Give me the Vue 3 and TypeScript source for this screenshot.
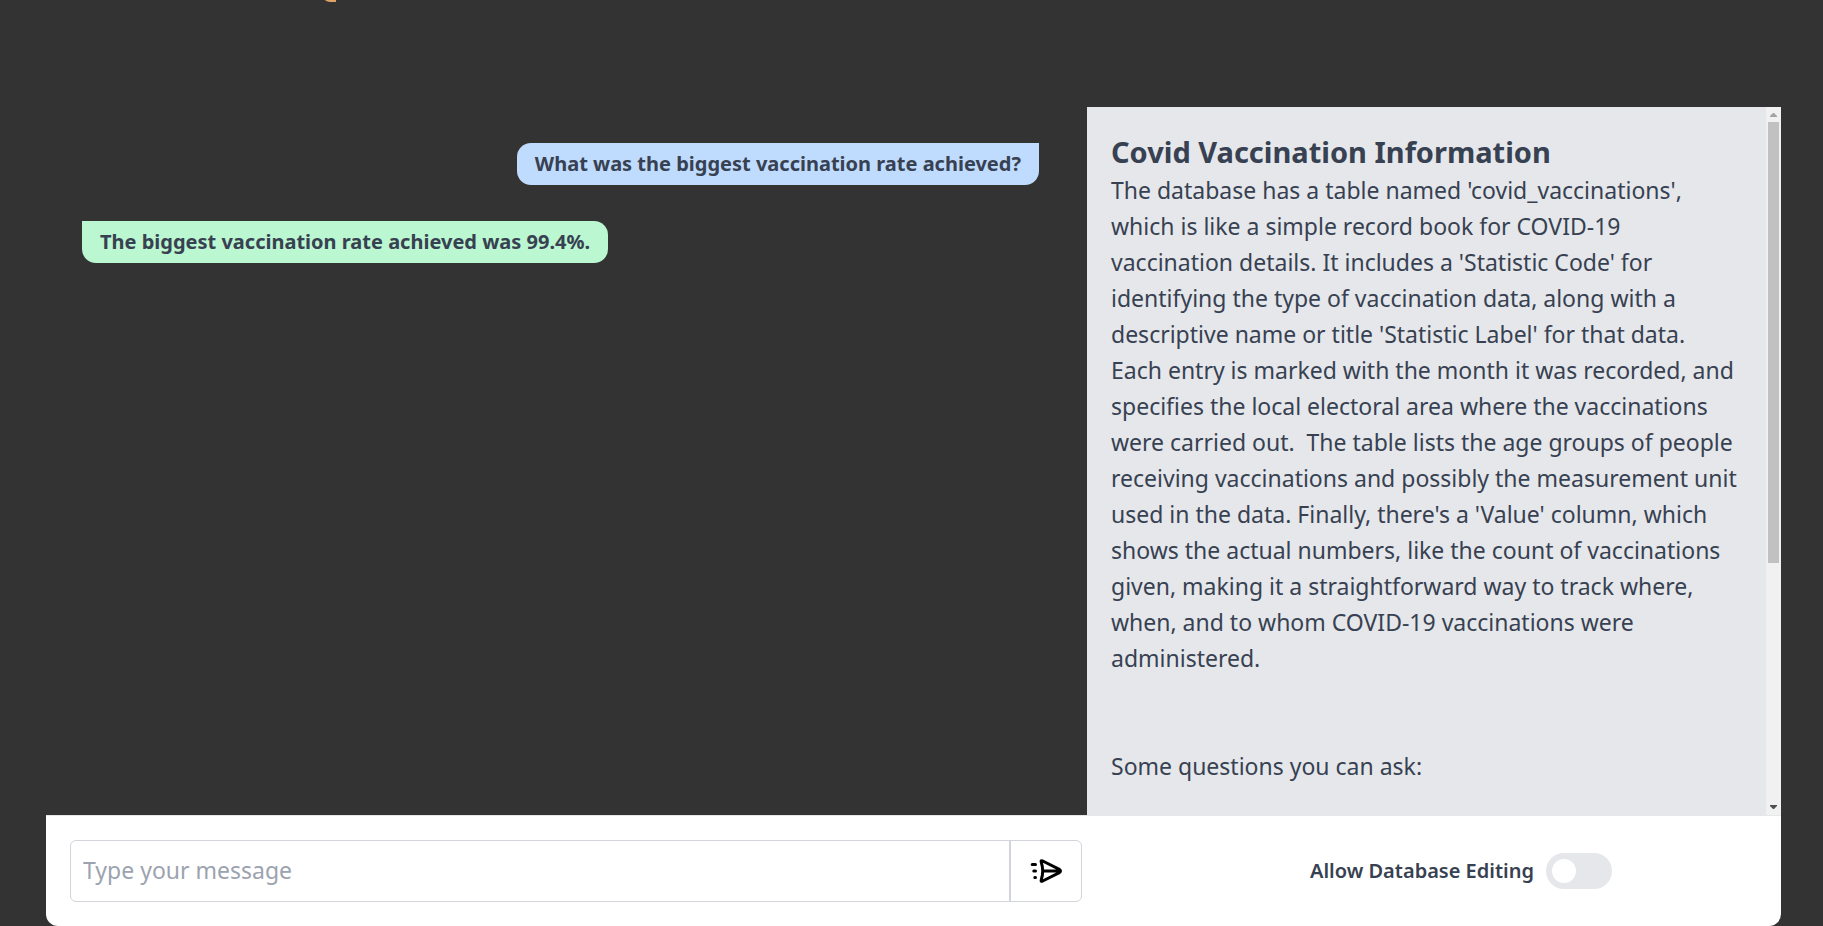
<script setup lang="ts">
import { ref } from 'vue'

interface Message {
  from: 'user' | 'bot'
  text: string
}

const messages = ref<Message[]>([
  { from: 'user', text: 'What was the biggest vaccination rate achieved?' },
  { from: 'bot', text: 'The biggest vaccination rate achieved was 99.4%.' },
])

const description = [
  "The database has a table named 'covid_vaccinations',",
  'which is like a simple record book for COVID-19',
  "vaccination details. It includes a 'Statistic Code' for",
  'identifying the type of vaccination data, along with a',
  "descriptive name or title 'Statistic Label' for that data.",
  'Each entry is marked with the month it was recorded, and',
  'specifies the local electoral area where the vaccinations',
  'were carried out.  The table lists the age groups of people',
  'receiving vaccinations and possibly the measurement unit',
  "used in the data. Finally, there's a 'Value' column, which",
  'shows the actual numbers, like the count of vaccinations',
  'given, making it a straightforward way to track where,',
  'when, and to whom COVID-19 vaccinations were',
  'administered.',
].join('\n')

const draft = ref('')
const allowEditing = ref(false)

function send() {
  const text = draft.value.trim()
  if (!text) return
  messages.value.push({ from: 'user', text })
  draft.value = ''
}
</script>

<template>
  <div class="page">
    <header class="top">
      <svg class="mark" viewBox="0 0 12 2" aria-hidden="true">
        <path d="M0 0H11V2H7Q2 2 0 0Z" fill="#e0a266" />
      </svg>
    </header>

    <main class="body">
      <section class="chat" aria-label="Conversation">
        <p v-for="(m, i) in messages" :key="i" class="bubble" :class="m.from">{{ m.text }}</p>
      </section>

      <aside class="info">
        <div class="info-text">
          <h1>Covid Vaccination Information</h1>
          <p class="description">{{ description }}</p>
          <p class="questions">Some questions you can ask:</p>
        </div>
        <div class="scrollbar" aria-hidden="true">
          <svg class="arrow" viewBox="0 0 15 15"><path d="M4 10V9L7 6H8L11 9V10Z" fill="#a3a3a3" /></svg>
          <div class="track"><div class="thumb"></div></div>
          <svg class="arrow" viewBox="0 0 15 15"><path d="M4 5V6L7 9H8L11 6V5Z" fill="#505050" /></svg>
        </div>
      </aside>
    </main>

    <footer class="bar">
      <form class="composer" @submit.prevent="send">
        <input v-model="draft" type="text" placeholder="Type your message" aria-label="Message" />
        <button type="submit" aria-label="Send">
          <svg viewBox="0 0 36 36" fill="none" stroke="#000" stroke-width="3" stroke-linecap="round" stroke-linejoin="round">
            <path d="M13.2 9Q12.5 7.1 14.7 8L31.4 16.4Q33.6 18 31.4 19.6L14.7 28Q12.5 28.9 13.2 27Q16.2 18 13.2 9ZM15.5 18H31.5" />
            <path d="M4.2 11.5H7.5M5.8 18H7.5M6.8 24.5H7.5" />
          </svg>
        </button>
      </form>
      <div class="setting">
        <label for="allow-editing">Allow Database Editing</label>
        <input id="allow-editing" v-model="allowEditing" class="switch" type="checkbox" role="switch" />
      </div>
    </footer>
  </div>
</template>

<style>
body {
  margin: 0;
  background: #333;
}
</style>

<style scoped>
* {
  box-sizing: border-box;
}

.page {
  display: flex;
  flex-direction: column;
  min-height: 100vh;
  padding: 0 42px 0 46px;
  background: #333;
  color: #374151;
  font-family: 'Noto Sans', 'Open Sans', sans-serif;
}

.top {
  height: 107px;
  padding-left: 279px;
}

.mark {
  display: block;
  width: 12px;
  height: 2px;
}

.body {
  display: grid;
  grid-template-columns: 3fr 2fr;
  flex: 1;
}

.chat {
  display: flex;
  flex-direction: column;
  gap: 36px;
  padding: 36px 48px 36px 36px;
}

.bubble {
  margin: 0;
  padding: 6px 18px;
  font-size: 20px;
  font-weight: 700;
  line-height: 30px;
}

.user {
  align-self: flex-end;
  border-radius: 14px 0 14px 14px;
  background: #bfdbfe;
}

.bot {
  align-self: flex-start;
  border-radius: 0 14px 14px 14px;
  background: #bbf7d0;
}

.info {
  display: flex;
  background: #e5e7eb;
}

.info-text {
  flex: 1;
  min-width: 0;
  padding: 24px 0 0 24px;
}

h1 {
  margin: 0;
  font-size: 29px;
  font-weight: 700;
  line-height: 41px;
}

.description,
.questions {
  margin: 0;
  font-size: 23px;
  line-height: 36px;
  white-space: pre;
}

.questions {
  margin-top: 72px;
}

.scrollbar {
  display: flex;
  flex-direction: column;
  width: 15px;
  background: #f1f1f1;
}

.arrow {
  display: block;
  width: 15px;
  height: 15px;
}

.track {
  flex: 1;
  padding: 0 2px;
}

.thumb {
  height: 65%;
  background: #c1c1c1;
}

.bar {
  display: grid;
  grid-template-columns: 3fr 2fr;
  align-items: center;
  height: 111px;
  border-top: 1px solid #e5e7eb;
  border-radius: 0 0 12px 12px;
  background: #fff;
}

.composer {
  display: flex;
  height: 62px;
  margin: 0 5px 0 24px;
  border: 1px solid #d1d5db;
  border-radius: 6px;
}

.composer input {
  flex: 1;
  min-width: 0;
  padding: 0 12px 2px;
  border: 0;
  border-radius: 6px;
  outline: 0;
  background: transparent;
  color: inherit;
  font-family: inherit;
  font-size: 23px;
}

.composer input::placeholder {
  color: #9ca3af;
  opacity: 1;
}

.composer button {
  display: flex;
  align-items: center;
  justify-content: center;
  width: 72px;
  padding: 0;
  border: 0;
  border-left: 2px solid #d1d5db;
  background: transparent;
  cursor: pointer;
}

.composer svg {
  width: 36px;
  height: 36px;
}

.setting {
  display: flex;
  align-items: center;
  justify-content: center;
  gap: 12px;
  padding-left: 54px;
}

.setting label {
  font-size: 20px;
  font-weight: 600;
  line-height: 30px;
}

.switch {
  display: flex;
  align-items: center;
  width: 66px;
  height: 36px;
  margin: 0;
  padding: 6px;
  border-radius: 18px;
  appearance: none;
  background: #e5e7eb;
  cursor: pointer;
}

.switch::before {
  width: 24px;
  height: 24px;
  border-radius: 50%;
  background: #fff;
  content: '';
}

.switch:checked {
  justify-content: flex-end;
  background: #60a5fa;
}
</style>
